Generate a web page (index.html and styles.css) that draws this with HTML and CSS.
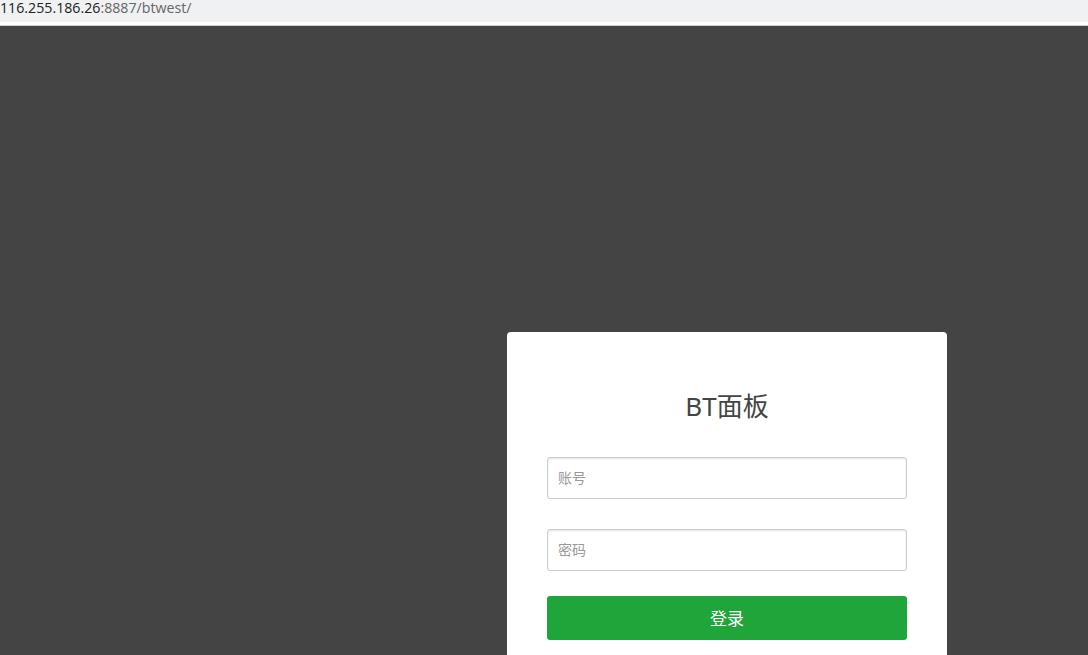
FILE: index.html
```html
<!DOCTYPE html>
<html lang="zh-CN">
<head>
<meta charset="utf-8">
<title>BT面板</title>
<link rel="stylesheet" href="styles.css">
</head>
<body>
<div class="addr"><span class="host">116.255.186.26</span><span class="path">:8887/btwest/</span></div>
<div class="sep"></div>
<main class="stage">
  <div class="card">
    <h1 class="title">BT面板</h1>
    <form class="form">
      <input class="field" type="text" placeholder="账号">
      <input class="field" type="password" placeholder="密码">
      <button class="btn" type="button">登录</button>
    </form>
  </div>
</main>
</body>
</html>
```
FILE: styles.css
```css
html, body {
  margin: 0;
  padding: 0;
  height: 100%;
  overflow: hidden;
  background: #444444;
  font-family: "Noto Sans", "Noto Sans CJK SC", sans-serif;
}
.addr {
  height: 22px;
  background: #f0f1f3;
  font-family: "Open Sans", "Noto Sans", sans-serif;
  font-size: 14.2px;
  line-height: 16px;
  white-space: nowrap;
}
.host { color: #222; }
.path { color: #666; }
.sep {
  height: 3px;
  background: #ffffff;
  border-bottom: 1px solid #cfcfcf;
}
.stage {
  background: #444444;
  padding: 306px 0 0 507px;
}
.card {
  width: 440px;
  background: #fff;
  border-radius: 4px 4px 0 0;
  padding: 0 40px 40px;
  box-sizing: border-box;
}
.title {
  margin: 0;
  padding-top: 55px;
  height: 38px;
  line-height: 38px;
  text-align: center;
  font-size: 26px;
  font-weight: 400;
  color: #444;
  font-family: "Noto Sans", "Noto Sans CJK SC", sans-serif;
}
.form {
  display: flex;
  flex-direction: column;
  padding-top: 32px;
}
.field {
  height: 42px;
  box-sizing: border-box;
  border: 1px solid #ccc;
  border-radius: 3px;
  box-shadow: inset 0 1px 2px rgba(0,0,0,0.12);
  padding: 0 10px 3px;
  font-size: 14px;
  font-family: "Noto Sans CJK SC", sans-serif;
  color: #333;
  margin: 0 0 30px;
  outline: none;
}
.field:nth-child(2) { margin-bottom: 25px; }
.field::placeholder { color: #999; }
.btn {
  height: 44px;
  border: 0;
  border-radius: 3px;
  background: #20a53a;
  color: #fff;
  font-size: 17px;
  font-family: "Noto Sans CJK SC", sans-serif;
  padding: 0 0 2px;
}
```
